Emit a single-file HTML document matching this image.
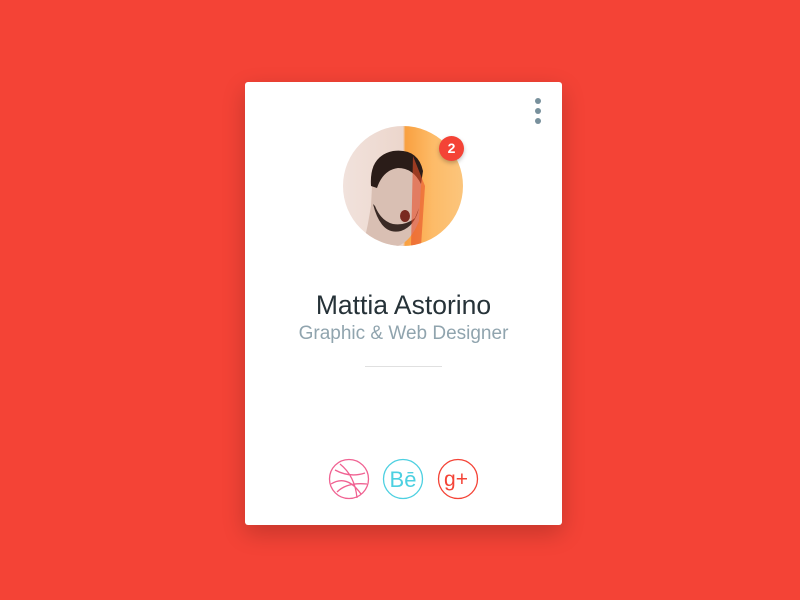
<!DOCTYPE html>
<html><head><meta charset="utf-8"><style>
body{margin:0;width:800px;height:600px;background:#f44336;position:relative;overflow:hidden;font-family:"Liberation Sans",sans-serif}
.card{position:absolute;left:245px;top:82px;width:317px;height:443px;background:#fff;border-radius:3px;box-shadow:0 8px 24px rgba(0,0,0,.2)}
.dot{position:absolute;left:290px;width:6px;height:6px;border-radius:50%;background:#78909c}
.av{position:absolute;left:98px;top:44px;width:120px;height:120px;border-radius:50%;overflow:hidden;background:linear-gradient(90deg,#f1e2dc 0%,#ecd6cc 50%,#f9a040 52%,#fdbb68 75%,#fbc57c 100%)}
.badge{position:absolute;left:194px;top:54px;width:25px;height:25px;border-radius:50%;background:#f44336;color:#fff;font-weight:bold;font-size:14px;text-align:center;line-height:25px;box-shadow:0 2px 4px rgba(0,0,0,.25)}
.name{position:absolute;left:0;width:317px;top:208px;text-align:center;font-size:26.5px;color:#263238}
.sub{position:absolute;left:0;width:317px;top:241px;text-align:center;font-size:19px;color:#90a4ae}
.hr{position:absolute;left:120px;top:284px;width:77px;height:1px;background:#e0e0e0}
</style></head><body>
<div class="card">
<div class="dot" style="top:16px"></div><div class="dot" style="top:26px"></div><div class="dot" style="top:36px"></div>
<div class="av"><svg width="120" height="120">
<path d="M30 40 Q45 22 70 30 Q82 40 78 60 L76 95 Q68 115 55 120 L20 120 Q25 100 28 80 Z" fill="#d9bfb3"/>
<path d="M28 60 Q26 30 50 25 Q75 22 80 45 L78 58 Q70 42 55 42 Q40 44 34 62 Z" fill="#2a1c18"/>
<path d="M30 78 Q38 110 58 105 Q72 100 76 82 L72 92 Q62 100 50 98 Q38 95 32 80Z" fill="#3a2a25"/>
<ellipse cx="62" cy="90" rx="5" ry="6" fill="#7a2a20"/>
<path d="M70 30 L82 60 L78 120 L68 120 Z" fill="#e8502a" opacity=".6"/>
</svg></div>
<div class="badge">2</div>
<div class="name">Mattia Astorino</div>
<div class="sub">Graphic &amp; Web Designer</div>
<div class="hr"></div>
<svg style="position:absolute;left:80px;top:374px" width="160" height="48" fill="none" stroke-width="1.3">
<g stroke="#f06292"><circle cx="24" cy="23" r="19.5"/><path d="M10 14 Q25 22 40 17 M6 28 Q22 18 36 38 M15 8 Q30 20 32 42 M12 36 Q22 26 42 28"/></g>
<g stroke="#4dd0e1"><circle cx="78" cy="23" r="19.5"/></g>
<text x="78" y="31" text-anchor="middle" font-family="Liberation Sans" font-size="22" fill="#4dd0e1">Bē</text>
<g stroke="#f44336"><circle cx="133" cy="23" r="19.5"/></g>
<text x="131" y="30" text-anchor="middle" font-family="Liberation Sans" font-size="21" fill="#f44336">g+</text>
</svg>
</div>
</body></html>
